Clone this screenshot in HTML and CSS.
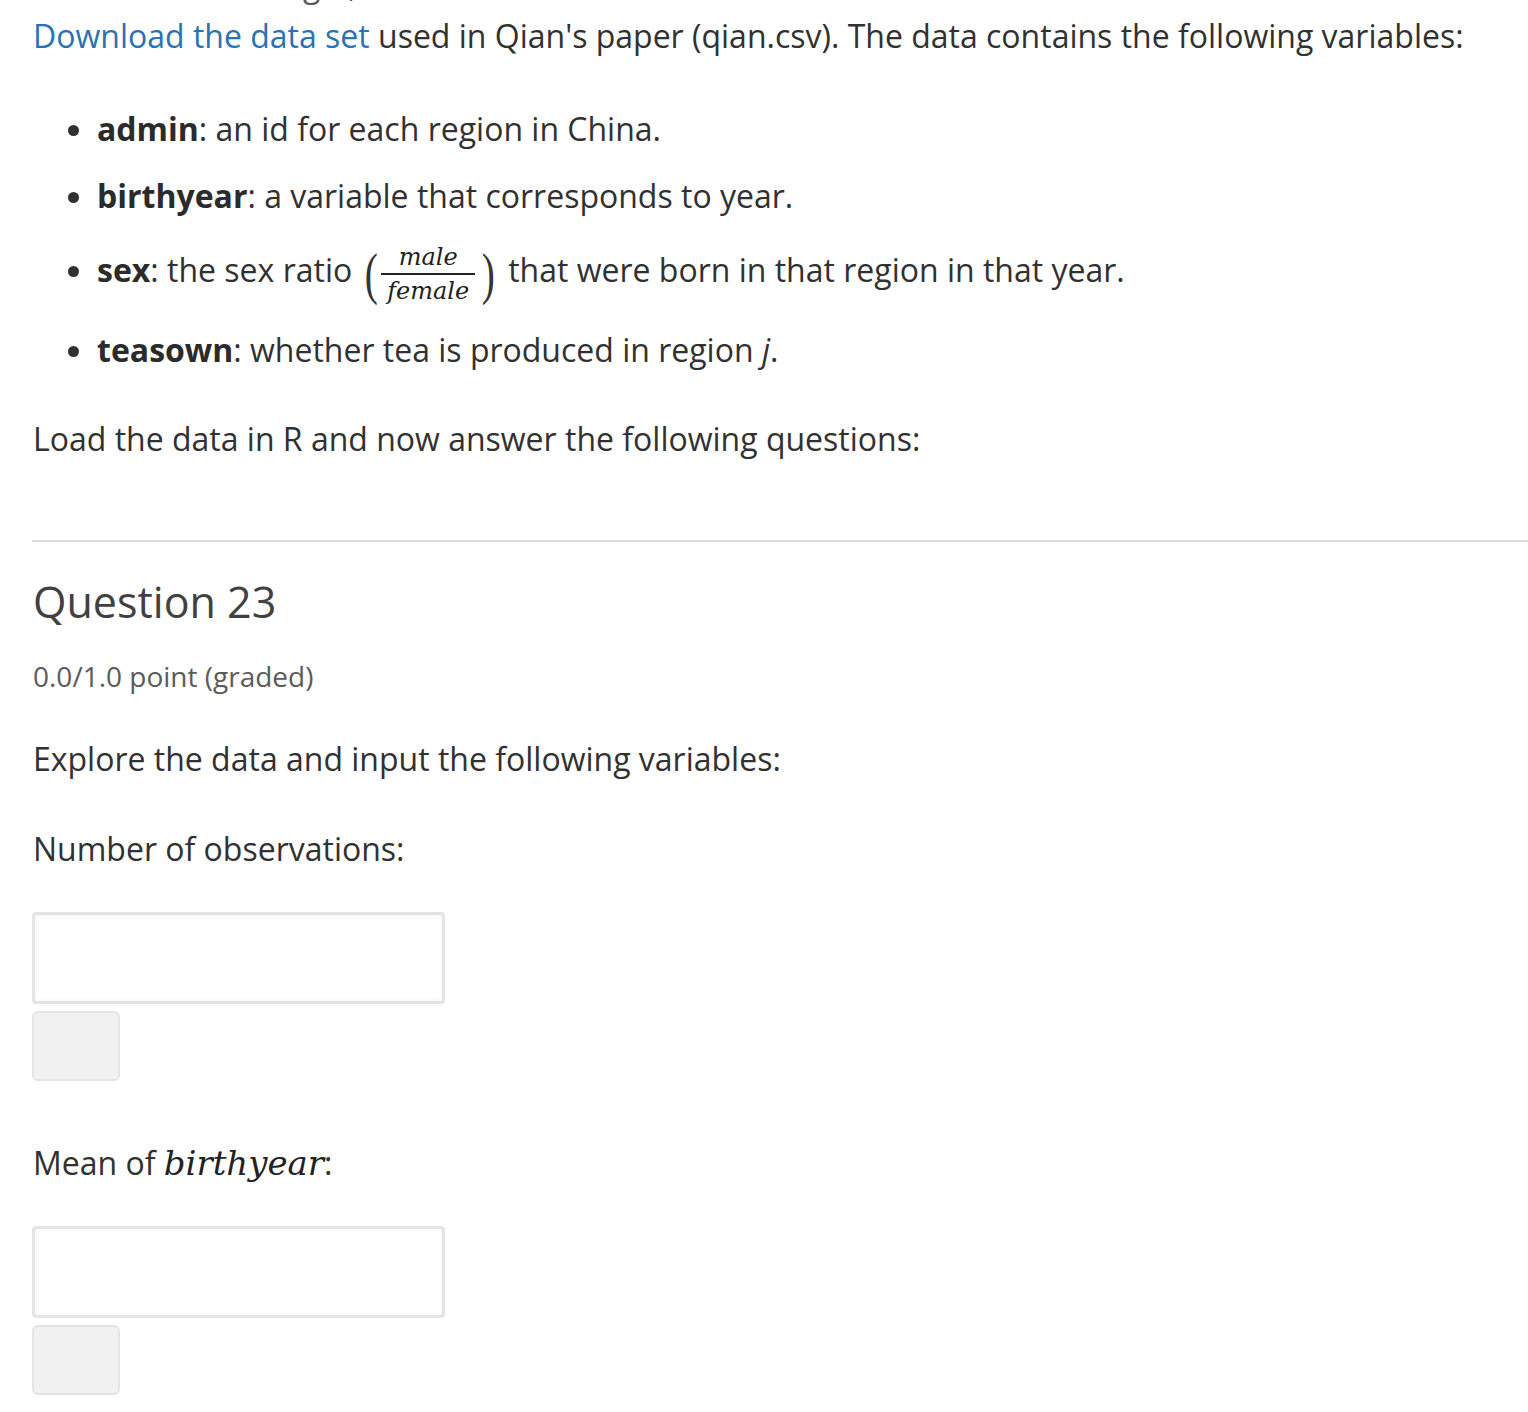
FILE: index.html
```html
<!DOCTYPE html>
<html>
<head>
<meta charset="utf-8">
<link rel="stylesheet" href="styles.css">
</head>
<body>
<div class="page">
  <div class="cut"><p class="cut-text">Let us do this using R, and</p></div>
  <p class="intro"><a href="#" class="link">Download the data set</a> used in Qian's paper (qian.csv). The data contains the following variables:</p>
  <ul class="vars">
    <li class="var"><strong>admin</strong>: an id for each region in China.</li>
    <li class="var"><strong>birthyear</strong>: a variable that corresponds to year.</li>
    <li class="var var-sex"><strong>sex</strong>: the sex ratio <span class="math"><span class="paren">(</span><span class="frac"><span class="num">male</span><span class="den">female</span></span><span class="paren">)</span></span> that were born in that region in that year.</li>
    <li class="var var-last"><strong>teasown</strong>: whether tea is produced in region <em>j</em>.</li>
  </ul>
  <p class="load">Load the data in R and now answer the following questions:</p>
  <hr class="rule">
  <h3 class="q-title">Question 23</h3>
  <div class="q-points">0.0/1.0 point (graded)</div>
  <p class="q-text">Explore the data and input the following variables:</p>
  <div class="field">
    <p class="label">Number of observations:</p>
    <input class="answer" type="text">
    <button class="submit" type="button"></button>
  </div>
  <div class="field field-2">
    <p class="label">Mean of <span class="mvar">birthyear</span>:</p>
    <input class="answer" type="text">
    <button class="submit" type="button"></button>
  </div>
</div>
</body>
</html>
```
FILE: styles.css
```css
html, body {
  margin: 0;
  padding: 0;
  background: #fff;
}
.page {
  font-family: "Open Sans", "Noto Sans", sans-serif;
  font-size: 32px;
  line-height: 48px;
  color: #313131;
  padding-left: 33px;
  overflow: hidden;
}
p { margin: 0; }
.cut {
  height: 12px;
  overflow: hidden;
}
.cut-text {
  margin-top: -39px;
  color: #5a5a5a;
  white-space: nowrap;
}
.intro { white-space: nowrap; }
.link {
  color: #2a72b4;
  text-decoration: none;
}
.vars {
  margin: 45px 0 0 0;
  padding-left: 64px;
  list-style: disc;
}
.var { margin-bottom: 19px; height: 48px; }
.var strong { font-weight: 700; color: #2b2b2b; }
.var-sex { margin-bottom: 13px; height: 72px; padding-top: 2px; }
.var-last { margin-bottom: 0; }
.var em { font-style: italic; }
.math {
  display: inline-flex;
  align-items: center;
  vertical-align: middle;
  font-family: "DejaVu Serif", "Liberation Serif", serif;
  font-style: italic;
  margin: 0 2px 0 1px;
  position: relative;
  top: 1px;
  color: #222;
}
.paren {
  font-style: normal;
  font-family: "Liberation Serif", serif;
  font-size: 56px;
  line-height: 1;
  display: inline-block;
  transform: scaleX(0.7);
  color: #333;
}
.frac {
  display: inline-flex;
  flex-direction: column;
  align-items: stretch;
  font-size: 24px;
  line-height: 30px;
  margin: 0 4px 0 1px;
}
.num {
  border-bottom: 2px solid #222;
  padding: 0 0 1px;
  text-align: center;
}
.den {
  padding: 1px 6px 0;
  text-align: center;
}
.load { margin-top: 41px; }
.rule {
  margin: 77px 0 0 -1px;
  border: 0;
  border-top: 2px solid #dcdcdc;
}
.q-title {
  margin: 34px 0 0 0;
  font-size: 43px;
  font-weight: 400;
  line-height: 52px;
  color: #414141;
}
.q-points {
  margin-top: 27px;
  font-size: 28px;
  line-height: 42px;
  color: #5b5b5b;
}
.q-text { margin-top: 38px; }
.field { margin-top: 42px; }
.field-2 { margin-top: 58px; }
.label { margin: 0; }
.answer {
  display: block;
  box-sizing: border-box;
  width: 413px;
  height: 92px;
  margin: 39px 0 0 -1px;
  border: 3px solid #e4e4e4;
  border-radius: 4px;
  box-shadow: inset 0 0 4px rgba(0,0,0,0.07);
  background: #fff;
  outline: none;
}
.submit {
  display: block;
  box-sizing: border-box;
  width: 88px;
  height: 70px;
  margin: 7px 0 0 -1px;
  border: 2px solid #e4e4e4;
  border-radius: 6px;
  background: #f1f1f1;
  padding: 0;
}
.mvar {
  font-family: "DejaVu Serif", "Liberation Serif", serif;
  font-style: italic;
  font-size: 34px;
  color: #222;
}
```
